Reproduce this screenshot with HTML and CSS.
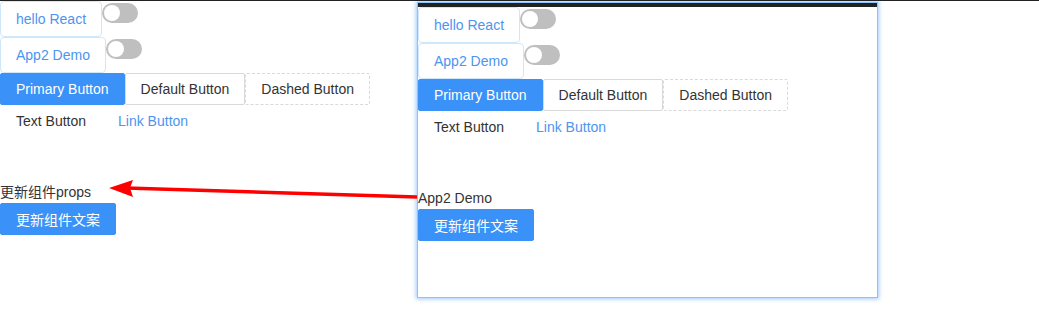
FILE: index.html
```html
<!DOCTYPE html>
<html lang="zh">
<head>
    <meta charset="UTF-8">
    <title>App2 Demo</title>
    <link rel="stylesheet" href="styles.css">
</head>
<body>

<div class="page">
    <!-- Aplicación principal -->
    <div class="host">
        <div class="demo">
            <div class="row">
                <span class="tag">hello React</span>
                <span class="switch"><span class="knob"></span></span>
            </div>
            <div class="row">
                <span class="tag">App2 Demo</span>
                <span class="switch"><span class="knob"></span></span>
            </div>
            <div class="btn-row">
                <button class="btn btn-primary">Primary Button</button>
                <button class="btn btn-default">Default Button</button>
                <button class="btn btn-dashed">Dashed Button</button>
            </div>
            <div class="btn-row">
                <button class="btn btn-text">Text Button</button>
                <button class="btn btn-link">Link Button</button>
            </div>
            <p class="label">更新组件props</p>
            <button class="btn btn-primary">更新组件文案</button>
        </div>
    </div>

    <!-- Microaplicación -->
    <div class="panel">
        <div class="panel-bar"></div>
        <div class="demo">
            <div class="row">
                <span class="tag">hello React</span>
                <span class="switch"><span class="knob"></span></span>
            </div>
            <div class="row">
                <span class="tag">App2 Demo</span>
                <span class="switch"><span class="knob"></span></span>
            </div>
            <div class="btn-row">
                <button class="btn btn-primary">Primary Button</button>
                <button class="btn btn-default">Default Button</button>
                <button class="btn btn-dashed">Dashed Button</button>
            </div>
            <div class="btn-row">
                <button class="btn btn-text">Text Button</button>
                <button class="btn btn-link">Link Button</button>
            </div>
            <p class="label">App2 Demo</p>
            <button class="btn btn-primary">更新组件文案</button>
        </div>
    </div>

    <!-- Flecha de anotación -->
    <svg class="arrow" width="1039" height="330" viewBox="0 0 1039 330">
        <line x1="417" y1="197" x2="126" y2="188" stroke="#f00" stroke-width="3.5"/>
        <polygon points="109,188 133,180 130,188 133,197" fill="#f00"/>
    </svg>
</div>

</body>
</html>
```

FILE: styles.css
```css
/* Reset */
* {
    box-sizing: border-box;
    margin: 0;
    padding: 0;
}

body {
    font-family: 'Liberation Sans', 'Noto Sans CJK SC', sans-serif;
    font-size: 14px;
    color: #333;
    background-color: #fff;
    border-top: 1px solid #222;
}

.page {
    position: relative;
    display: flex;
    align-items: flex-start;
    height: 329px;
}

.host {
    width: 417px;
}

/* Panel de la microaplicación */
.panel {
    width: 461px;
    height: 296px;
    margin-top: 1px;
    border: 1px solid #8fc2fb;
    box-shadow: 0 0 4px 1px rgba(64, 150, 255, 0.5);
    background-color: #fff;
}

.panel-bar {
    height: 4px;
    background-color: #222;
}

/* Filas con etiqueta e interruptor */
.row {
    display: flex;
    align-items: flex-start;
}

.tag {
    display: inline-flex;
    align-items: center;
    height: 36px;
    padding: 0 15px;
    border: 1px solid #cfe7fb;
    border-radius: 4px;
    color: #4d94f0;
    background-color: #fff;
}

.switch {
    position: relative;
    width: 36px;
    height: 20px;
    margin-top: 2px;
    border-radius: 10px;
    background-color: #bfbfbf;
}

.knob {
    position: absolute;
    top: 2px;
    left: 2px;
    width: 16px;
    height: 16px;
    border-radius: 50%;
    background-color: #fff;
}

/* Botones */
.btn-row {
    display: flex;
}

.btn {
    height: 32px;
    padding: 0 15px;
    font-family: inherit;
    font-size: 14px;
    border: 1px solid transparent;
    border-radius: 2px;
    background-color: transparent;
    color: #333;
    cursor: pointer;
}

.btn-primary {
    background-color: #3a91f8;
    border-color: #3a91f8;
    color: #fff;
}

.btn-default {
    border-color: #d9d9d9;
    background-color: #fff;
}

.btn-dashed {
    border: 1px dashed #d9d9d9;
    background-color: #fff;
}

.btn-link {
    color: #4d94f0;
}

.label {
    margin-top: 44px;
    line-height: 22px;
}

/* Anotación */
.arrow {
    position: absolute;
    top: -1px;
    left: 0;
    pointer-events: none;
}
```
